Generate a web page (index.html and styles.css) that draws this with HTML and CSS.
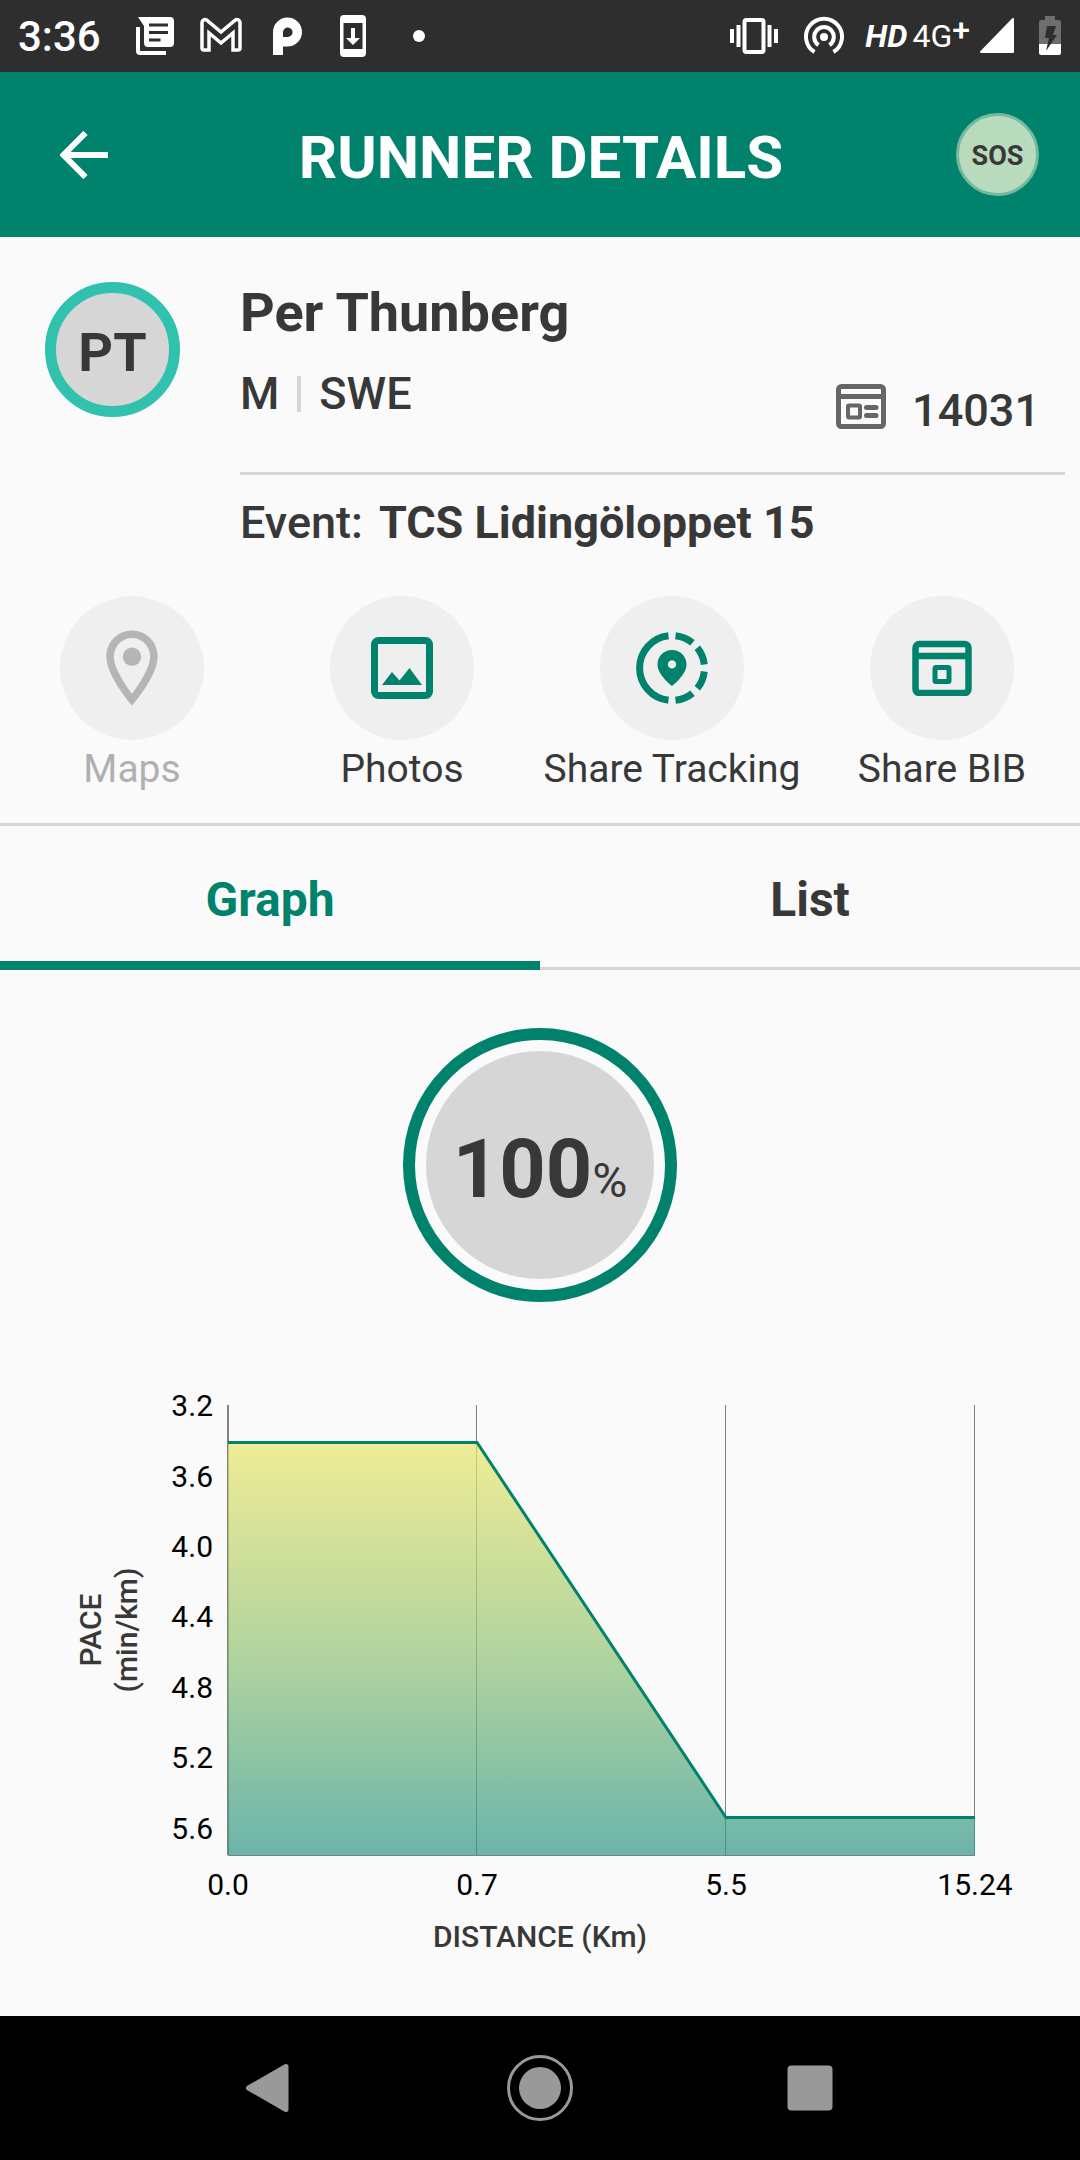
FILE: index.html
```html
<!DOCTYPE html>
<html lang="en">
<head>
    <meta charset="UTF-8">
    <meta name="viewport" content="width=device-width, initial-scale=1.0">
    <title>Runner Details</title>
    <link rel="stylesheet" href="styles.css">
</head>
<body>

<div class="status-bar">
    <div class="status-left">
        <span class="clock">3:36</span>
        <svg class="status-icon" width="48" height="48" viewBox="0 0 48 48">
            <path d="M7 5h32a4 4 0 0 1 4 4v22a4 4 0 0 1-4 4H17a4 4 0 0 1-4-4V14z" fill="#fff"/>
            <path d="M18 13h19M18 20.500h19M18 28h11.500" stroke="#2e2e2e" stroke-width="3"/>
            <path d="M7 15v24a2 2 0 0 0 2 2h26" fill="none" stroke="#fff" stroke-width="4"/>
        </svg>
        <svg class="status-icon" width="48" height="48" viewBox="0 0 48 48">
            <path d="M5 10.500a3 3 0 0 1 4.800-2.300L24 20 38.200 8.200A3 3 0 0 1 43 10.500V36a2 2 0 0 1-2 2h-5V21L24 31 12 21v17H7a2 2 0 0 1-2-2z" fill="none" stroke="#fff" stroke-width="3.500"/>
        </svg>
        <svg class="status-icon" width="48" height="48" viewBox="0 0 48 48">
            <path d="M10 43V20a14.500 14.500 0 1 1 14.500 14.500H20V43z" fill="#fff"/>
            <path d="M20 25v-5a4.800 4.800 0 1 1 4.800 5z" fill="#2e2e2e"/>
        </svg>
        <svg class="status-icon" width="48" height="48" viewBox="0 0 48 48">
            <rect x="11" y="3" width="26" height="42" rx="4" fill="#fff"/>
            <rect x="14.500" y="11" width="19" height="26" fill="#2e2e2e"/>
            <path d="M22 16h4v10h5l-7 7-7-7h5z" fill="#fff"/>
        </svg>
        <svg class="status-icon" width="48" height="48" viewBox="0 0 48 48">
            <circle cx="24" cy="24" r="6" fill="#fff"/>
        </svg>
    </div>
    <div class="status-right">
        <svg class="vibrate" width="50" height="40" viewBox="0 0 50 40">
            <rect x="15.500" y="4" width="19" height="32" rx="2" fill="none" stroke="#fff" stroke-width="4"/>
            <path d="M9.500 9v22M3 13v14M40.500 9v22M47 13v14" stroke="#fff" stroke-width="4"/>
        </svg>
        <svg class="hotspot" width="42" height="40" viewBox="0 0 42 40">
            <path d="M11.500 36A18 18 0 1 1 30.500 36M15.500 29a9.800 9.800 0 1 1 11 0" fill="none" stroke="#fff" stroke-width="4"/>
            <circle cx="21" cy="21" r="4" fill="#fff"/>
        </svg>
        <span class="hd">HD</span>
        <span class="network">4G<sup>+</sup></span>
        <svg class="signal" width="34" height="36" viewBox="0 0 34 36">
            <path d="M33 1v33H1z" fill="#fff" stroke="#fff" stroke-width="2" stroke-linejoin="round"/>
        </svg>
        <svg width="24" height="40" viewBox="0 0 24 40">
            <path d="M7 0h10v4h4q2 0 2 2v23H1V6q0-2 2-2h4z" fill="#6e6e6e"/>
            <path d="M1 28h22v9q0 2-2 2H3q-2 0-2-2z" fill="#fff"/>
            <path d="M9 10h9l-3 9h4L8 35l3-13H7z" fill="#2e2e2e"/>
        </svg>
    </div>
</div>

<header class="app-bar">
    <button class="back" aria-label="Back">
        <svg width="48" height="48" viewBox="0 0 48 48">
            <path d="M48 24H4M25.500 2l-22 22 22 22" fill="none" stroke="#fff" stroke-width="6"/>
        </svg>
    </button>
    <h1>RUNNER DETAILS</h1>
    <button class="sos">SOS</button>
</header>

<main>
    <section class="runner">
        <div class="avatar">PT</div>
        <div class="runner-info">
            <h2>Per Thunberg</h2>
            <div class="runner-row">
                <div class="meta">
                    <span>M</span>
                    <span class="separator"></span>
                    <span>SWE</span>
                </div>
                <div class="bib">
                    <svg width="50" height="46" viewBox="0 0 50 46" fill="none" stroke="#666" stroke-width="5">
                        <rect x="2.500" y="2.500" width="45" height="40" rx="3"/>
                        <path d="M3 12.500h44"/>
                        <rect x="12" y="21.500" width="12" height="12" rx="1" stroke-width="4"/>
                        <path d="M30.500 23.500h9.500M30.500 31.500h9.500" stroke-linecap="round"/>
                    </svg>
                    <span>14031</span>
                </div>
            </div>
            <div class="event"><span>Event:</span><strong>TCS Lidingöloppet 15</strong></div>
        </div>
    </section>

    <nav class="actions">
        <button class="action" disabled>
            <span class="action-icon">
                <svg width="90" height="90" viewBox="0 0 24 24" fill="#b5b5b5">
                    <path d="M12 2C8.130 2 5.150 5.130 5.150 9c0 5.250 6.850 13 6.850 13s6.850-7.750 6.850-13c0-3.870-2.980-7-6.850-7zM7.150 9a4.850 5 0 0 1 9.700 0c0 2.880-2.880 7.190-4.850 9.880C10.060 16.210 7.150 11.850 7.150 9z"/>
                    <circle cx="12" cy="9" r="2.450"/>
                </svg>
            </span>
            <span>Maps</span>
        </button>
        <button class="action">
            <span class="action-icon">
                <svg width="62" height="62" viewBox="0 0 62 62">
                    <rect x="3.500" y="3.500" width="55" height="55" rx="4" fill="none" stroke="#00826d" stroke-width="7"/>
                    <path d="M11 48l10-13 7.500 8.500L38.500 31 51 48z" fill="#00826d"/>
                </svg>
            </span>
            <span>Photos</span>
        </button>
        <button class="action">
            <span class="action-icon">
                <svg width="72" height="72" viewBox="0 0 72 72">
                    <path d="M32.500 3.700a32.500 32.500 0 0 0 0 64.600M39.500 3.700A32.500 32.500 0 0 1 56.500 10.800M61.300 15.700A32.500 32.500 0 0 1 68.300 32.500M68.300 39.500A32.500 32.500 0 0 1 61.300 56.300M56.500 61.200A32.500 32.500 0 0 1 39.500 68.300" fill="none" stroke="#00826d" stroke-width="7"/>
                    <path fill-rule="evenodd" d="M36 18c-8.500 0-14.500 6.500-14.500 14.500C21.500 43 36 54 36 54s14.500-11 14.500-21.500C50.500 24.500 44.500 18 36 18zm0 10.200a4.200 4.200 0 1 0 0 8.400 4.200 4.200 0 0 0 0-8.400z" fill="#00826d"/>
                </svg>
            </span>
            <span>Share Tracking</span>
        </button>
        <button class="action">
            <span class="action-icon">
                <svg width="60" height="56" viewBox="0 0 60 56" fill="none" stroke="#00826d" stroke-width="6.500">
                    <rect x="3.500" y="4" width="53" height="49" rx="4"/>
                    <path d="M4 16h52"/>
                    <rect x="23" y="27.500" width="14" height="14" rx="1" stroke-width="5"/>
                </svg>
            </span>
            <span>Share BIB</span>
        </button>
    </nav>

    <div class="tabs" role="tablist">
        <button class="tab active" role="tab" aria-selected="true">Graph</button>
        <button class="tab" role="tab" aria-selected="false">List</button>
    </div>

    <section class="progress">
        <div class="ring">
            <div class="ring-inner"><strong>100</strong><span>%</span></div>
        </div>
    </section>

    <svg class="chart" viewBox="0 0 1080 600">
        <defs>
            <linearGradient id="pace" x1="0" y1="0" x2="0" y2="1">
                <stop offset="0" stop-color="#eae66b"/>
                <stop offset="0.5" stop-color="#96c577"/>
                <stop offset="1" stop-color="#2f9788"/>
            </linearGradient>
        </defs>

        <!-- grid -->
        <path class="axis" d="M228 25V475"/>
        <path class="grid" d="M476.500 25V475M725.500 25V475M974.500 25V475"/>

        <!-- pace area and line -->
        <path d="M228 62H477L726 437H975V475H228z" fill="url(#pace)" fill-opacity="0.7"/>
        <path class="grid" d="M228 475.500H975"/>
        <path class="pace-line" d="M228 62.500H477L726 437.500H975"/>

        <g class="tick" text-anchor="end">
            <text x="213" y="36">3.2</text>
            <text x="213" y="107">3.6</text>
            <text x="213" y="177">4.0</text>
            <text x="213" y="247">4.4</text>
            <text x="213" y="318">4.8</text>
            <text x="213" y="388">5.2</text>
            <text x="213" y="459">5.6</text>
        </g>
        <g class="tick" text-anchor="middle">
            <text x="228" y="515">0.0</text>
            <text x="477" y="515">0.7</text>
            <text x="726" y="515">5.5</text>
            <text x="975" y="515">15.24</text>
        </g>

        <text class="axis-title" x="540" y="567" text-anchor="middle">DISTANCE (Km)</text>
        <g class="axis-title" text-anchor="middle" transform="rotate(-90)">
            <text x="-250" y="101">PACE</text>
            <text x="-250" y="137">(min/km)</text>
        </g>
    </svg>
</main>

<div class="system-nav">
    <button aria-label="Back">
        <svg width="66" height="66" viewBox="0 0 66 66">
            <path d="M49 11.500v43L11.500 33z" fill="#999" stroke="#999" stroke-width="5" stroke-linejoin="round"/>
        </svg>
    </button>
    <button aria-label="Home">
        <svg width="66" height="66" viewBox="0 0 66 66">
            <circle cx="33" cy="33" r="31.500" fill="none" stroke="#999" stroke-width="3"/>
            <circle cx="33" cy="33" r="21" fill="#999"/>
        </svg>
    </button>
    <button aria-label="Recent apps">
        <svg width="66" height="66" viewBox="0 0 66 66">
            <rect x="10.500" y="10.500" width="45" height="45" rx="4" fill="#999"/>
        </svg>
    </button>
</div>

</body>
</html>
```

FILE: styles.css
```css
* {
    box-sizing: border-box;
}
body {
    margin: 0;
    min-height: 100vh;
    display: flex;
    flex-direction: column;
    font-family: Roboto, sans-serif;
    background-color: #fafafa;
    color: #383838;
}
h1, h2 {
    margin: 0;
}
button {
    padding: 0;
    border: none;
    background: none;
    font-family: inherit;
    color: inherit;
    cursor: pointer;
}
svg {
    display: block;
    flex-shrink: 0;
}

/* Status bar */
.status-bar {
    height: 72px;
    padding: 0 18px;
    display: flex;
    align-items: center;
    justify-content: space-between;
    background-color: #2e2e2e;
    color: white;
}
.status-left, .status-right {
    display: flex;
    align-items: center;
}
.clock {
    font-size: 42px;
    font-weight: 500;
    margin-right: 12px;
}
.status-icon {
    margin-left: 18px;
}
.hotspot {
    margin: 0 20px 0 24px;
}
.hd {
    font-size: 32px;
    font-weight: 700;
    font-style: italic;
    margin-right: 5px;
}
.network {
    font-size: 32px;
}
.network sup {
    font-size: 32px;
    font-weight: 500;
    line-height: 0;
    vertical-align: 6px;
}
.signal {
    margin: 0 24px 0 10px;
}

/* App bar */
.app-bar {
    height: 165px;
    padding: 0 41px 0 60px;
    display: flex;
    align-items: center;
    justify-content: space-between;
    background-color: #00826d;
    color: white;
}
.app-bar h1 {
    padding: 6px 0 0 18px;
    font-size: 60px;
    font-weight: 700;
}
.sos {
    width: 83px;
    height: 83px;
    padding-top: 2px;
    border: 3px solid #74b89e;
    border-radius: 50%;
    background-color: #b8dbbd;
    color: #383838;
    font-size: 27px;
    font-weight: 700;
}

main {
    flex: 1;
}

/* Runner */
.runner {
    display: flex;
    gap: 60px;
    padding: 45px 15px 46px 45px;
}
.avatar {
    width: 135px;
    height: 135px;
    flex-shrink: 0;
    display: flex;
    align-items: center;
    justify-content: center;
    padding-top: 6px;
    border: 11px solid #30c1af;
    border-radius: 50%;
    background-color: #d6d6d6;
    font-size: 54px;
    font-weight: 700;
}
.runner-info {
    flex: 1;
}
.runner-info h2 {
    font-size: 54px;
    line-height: 62px;
    font-weight: 700;
}
.runner-row {
    display: flex;
    justify-content: space-between;
    height: 131px;
    padding: 23px 25px 34px 0;
    border-bottom: 3px solid #d6d6d6;
    font-size: 45px;
    line-height: 54px;
    font-weight: 500;
}
.meta {
    display: flex;
    align-items: center;
    align-self: flex-start;
    gap: 18px;
}
.separator {
    width: 4px;
    height: 36px;
    background-color: #d6d6d6;
}
.bib {
    display: flex;
    align-items: flex-start;
    align-self: flex-end;
    gap: 26px;
}
.event {
    display: flex;
    gap: 16px;
    padding-top: 21px;
    font-size: 45px;
    line-height: 54px;
    font-weight: 500;
}
.event strong {
    font-weight: 700;
}

/* Actions */
.actions {
    display: grid;
    grid-template-columns: repeat(4, 1fr);
    padding-bottom: 30px;
    border-bottom: 3px solid #d6d6d6;
}
.action {
    display: flex;
    flex-direction: column;
    align-items: center;
    gap: 5px;
    padding-right: 6px;
    font-size: 39px;
    line-height: 48px;
    white-space: nowrap;
}
.action:disabled {
    color: #b0b0b0;
    cursor: default;
}
.action-icon {
    width: 144px;
    height: 144px;
    display: flex;
    align-items: center;
    justify-content: center;
    border-radius: 50%;
    background-color: #efefef;
}

/* Tabs */
.tabs {
    display: flex;
    height: 144px;
    box-shadow: inset 0 -3px #d6d6d6;
}
.tab {
    flex: 1;
    padding-top: 12px;
    border-bottom: 9px solid transparent;
    font-size: 48px;
    font-weight: 700;
}
.tab.active {
    color: #00826d;
    border-bottom-color: #00826d;
}

/* Progress */
.progress {
    display: flex;
    justify-content: center;
    padding: 58px 0 78px;
}
.ring {
    width: 274px;
    height: 274px;
    padding: 11px;
    border: 12px solid #00826d;
    border-radius: 50%;
}
.ring-inner {
    height: 100%;
    display: flex;
    align-items: baseline;
    justify-content: center;
    border-radius: 50%;
    background-color: #d6d6d6;
    line-height: 238px;
}
.ring-inner strong {
    font-size: 81px;
    font-weight: 700;
}
.ring-inner span {
    font-size: 48px;
}

/* Chart */
.chart {
    width: 100%;
}
.axis {
    stroke: #808080;
    stroke-width: 2;
}
.grid {
    stroke: #808080;
    stroke-width: 1;
}
.pace-line {
    fill: none;
    stroke: #00826d;
    stroke-width: 3;
}
.tick {
    font-size: 30px;
    fill: black;
}
.axis-title {
    font-size: 30px;
    font-weight: 500;
    fill: #383838;
}

/* System navigation */
.system-nav {
    height: 144px;
    display: flex;
    align-items: center;
    justify-content: center;
    gap: 204px;
    background-color: black;
}
```
